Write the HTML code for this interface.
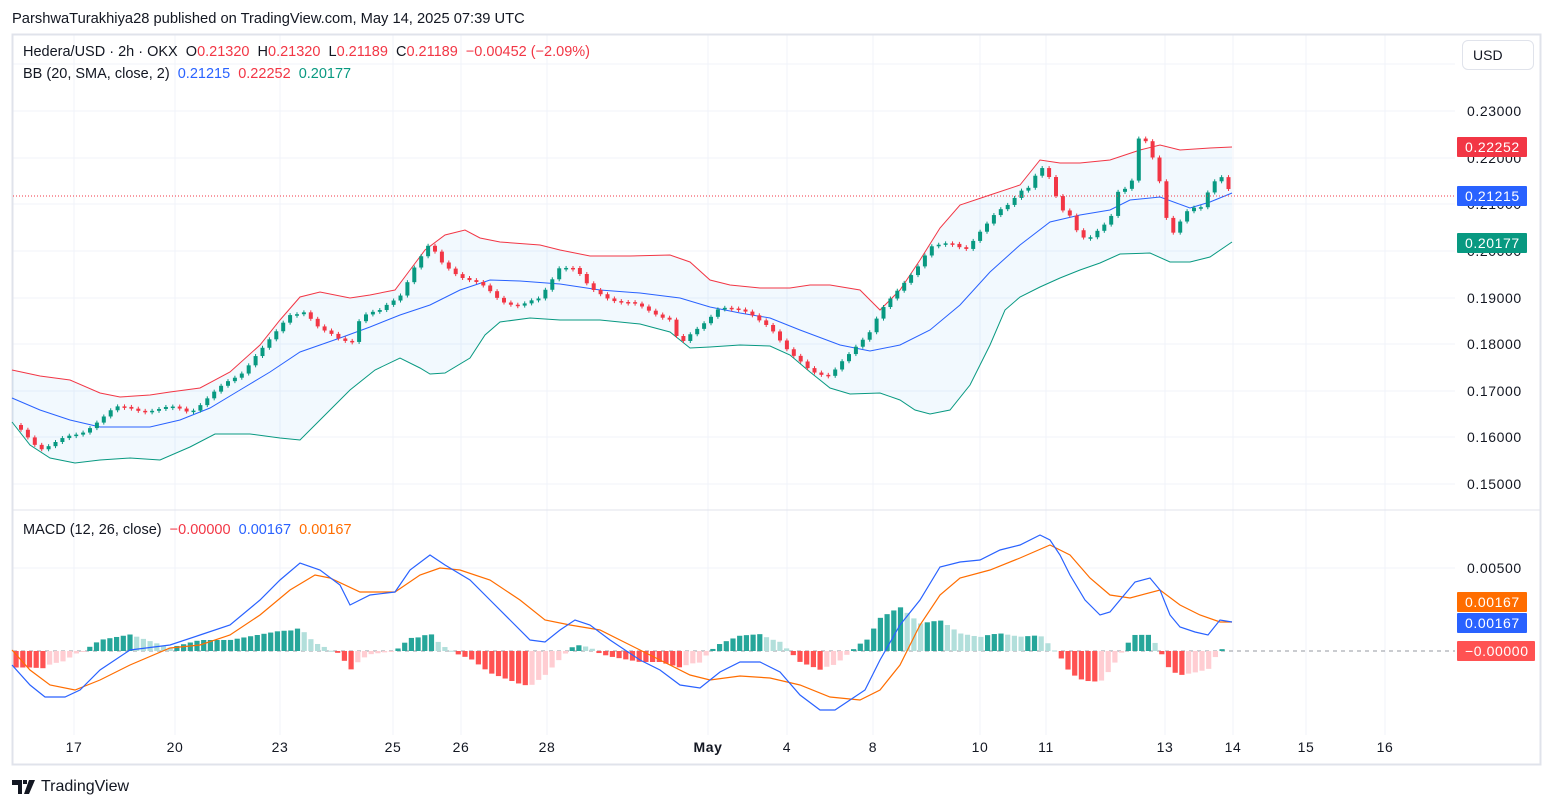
<!DOCTYPE html>
<html><head><meta charset="utf-8"><style>
body{margin:0;width:1554px;height:809px;background:#fff;font-family:"Liberation Sans",sans-serif;overflow:hidden;position:relative;color:#131722}
.t{position:absolute;white-space:nowrap}
</style></head><body>
<div class="t" style="left:12px;top:11px;font-size:14.7px;color:#131722">ParshwaTurakhiya28 published on TradingView.com, May 14, 2025 07:39 UTC</div>
<svg id="s" width="1554" height="809" style="position:absolute;left:0;top:0" xmlns="http://www.w3.org/2000/svg"></svg>
<div class="t" style="left:23px;top:44px;font-size:14.5px">Hedera/USD · 2h · OKX&nbsp; O<span style="color:#f23645">0.21320</span>&nbsp; H<span style="color:#f23645">0.21320</span>&nbsp; L<span style="color:#f23645">0.21189</span>&nbsp; C<span style="color:#f23645">0.21189</span>&nbsp; <span style="color:#f23645">−0.00452 (−2.09%)</span></div>
<div class="t" style="left:23px;top:66px;font-size:14.5px">BB (20, SMA, close, 2)&nbsp; <span style="color:#2962ff">0.21215</span>&nbsp; <span style="color:#f23645">0.22252</span>&nbsp; <span style="color:#089981">0.20177</span></div>
<div class="t" style="left:23px;top:522px;font-size:14.5px">MACD (12, 26, close)&nbsp; <span style="color:#f23645">−0.00000</span>&nbsp; <span style="color:#2962ff">0.00167</span>&nbsp; <span style="color:#ff6d00">0.00167</span></div>
<div class="t" style="left:1462px;top:40px;width:72px;height:30px;border:1px solid #e0e3eb;border-radius:6px;box-sizing:border-box;font-size:14px;line-height:28px;padding-left:10px">USD</div>
<div class="t" style="left:12px;top:778px;font-size:16px;display:flex;align-items:center"><svg width="26" height="14" viewBox="0 0 26 14"><path d="M0 0h10v14h-4v-9h-6z M11 0h4v4h-4z M17 0h6l-6 14h-5z" fill="#131722"/></svg><span style="margin-left:3px">TradingView</span></div>
<script>
const s=document.getElementById('s');let h='';
const L=(x1,y1,x2,y2,c,w,d)=>h+=`<line x1="${x1}" y1="${y1}" x2="${x2}" y2="${y2}" stroke="${c}" stroke-width="${w||1}" ${d?`stroke-dasharray="${d}"`:''}/>`;
const T=(x,y,t,c,a,fw)=>h+=`<text x="${x}" y="${y}" fill="${c||'#131722'}" font-size="14" letter-spacing="0.6" font-family="Liberation Sans" ${a?`text-anchor="${a}"`:''} ${fw?'font-weight="bold"':''}>${t}</text>`;
const days=[[74,'17'],[175,'20'],[280,'23'],[393,'25'],[461,'26'],[547,'28'],[708,'May'],[787,'4'],[873,'8'],[980,'10'],[1046,'11'],[1165,'13'],[1233,'14'],[1306,'15'],[1385,'16']];
days.forEach(d=>L(d[0],35,d[0],735,'#f0f3fa'));
[64,111,158,204,251,298,344,391,437,484].forEach(y=>L(13,y,1455,y,'#f0f3fa'));
L(13,568,1455,568,'#f0f3fa');
h+=`<rect x="12.5" y="34.5" width="1528" height="730" fill="none" stroke="#e0e3eb" stroke-width="2"/>`;
L(13,510,1540,510,'#e0e3eb',1);
function P(a){return a.map(p=>p.join(',')).join(' ')}
const up=[[12,370],[40,376],[70,380],[100,393],[120,397],[150,395],[170,392],[200,388],[230,372],[260,345],[280,320],[300,297],[320,292],[350,298],[370,295],[395,290],[410,270],[425,250],[445,235],[465,230],[480,238],[500,242],[540,245],[560,250],[590,256],[630,256],[670,255],[690,262],[710,280],[730,285],[760,288],[790,288],[810,285],[830,285],[860,290],[880,310],[900,290],[920,260],[940,228],[960,205],[990,195],[1020,185],[1040,160],[1060,163],[1080,163],[1110,160],[1140,150],[1160,145],[1180,150],[1210,148],[1232,147]];
const mid=[[12,398],[40,410],[70,420],[100,427],[150,427],[180,420],[210,408],[240,390],[270,372],[300,352],[340,338],[370,327],[400,315],[430,305],[460,290],[490,280],[520,281],[560,284],[600,290],[640,293],[680,298],[710,307],[740,313],[770,318],[800,330],[840,345],[870,351],[900,345],[930,330],[960,305],[990,272],[1020,245],[1050,222],[1080,215],[1110,210],[1130,200],[1160,197],[1190,208],[1210,202],[1232,193]];
const lo=[[12,422],[30,445],[50,458],[75,463],[100,460],[130,458],[160,460],[190,447],[215,434],[250,434],[280,438],[300,440],[320,420],[350,390],[375,370],[400,358],[420,368],[430,374],[445,373],[470,358],[485,335],[500,322],[530,318],[560,320],[600,320],[640,324],[670,332],[690,348],[710,347],[740,345],[770,346],[790,355],[810,372],[830,388],[850,394],[880,393],[900,400],[915,410],[930,414],[950,410],[970,385],[990,345],[1005,310],[1020,297],[1040,287],[1060,278],[1080,270],[1100,263],[1120,254],[1150,253],[1170,262],[1190,262],[1210,257],[1232,242]];
h+=`<polygon points="${P(up)} ${P(lo.slice().reverse())}" fill="#2196f3" fill-opacity="0.06"/>`;
h+=`<polyline points="${P(up)}" fill="none" stroke="#f23645" stroke-width="1"/>`;
h+=`<polyline points="${P(mid)}" fill="none" stroke="#2962ff" stroke-width="1"/>`;
h+=`<polyline points="${P(lo)}" fill="none" stroke="#089981" stroke-width="1"/>`;
function interp(a,x){for(let i=1;i<a.length;i++){if(x<=a[i][0]){const t=(x-a[i-1][0])/(a[i][0]-a[i-1][0]);return a[i-1][1]+t*(a[i][1]-a[i-1][1]);}}return a[a.length-1][1]}
const cl=[[14,425],[30,440],[40,448],[60,440],[80,435],[100,418],[115,408],[140,410],[170,408],[190,412],[210,395],[240,375],[255,355],[275,335],[290,315],[305,310],[320,330],[340,340],[355,340],[360,315],[380,312],[400,295],[415,265],[430,245],[440,262],[460,275],[480,285],[500,300],[520,305],[540,300],[560,265],[575,268],[590,290],[610,298],[630,303],[650,312],[670,318],[680,345],[700,328],[720,305],[750,315],[770,325],[790,355],[810,370],[830,375],[850,355],[870,330],[880,310],[900,290],[915,270],[930,245],[950,245],[965,250],[980,230],[995,215],[1010,205],[1020,190],[1030,185],[1040,165],[1050,180],[1060,210],[1070,215],[1080,235],[1090,237],[1100,230],[1110,222],[1120,185],[1130,190],[1140,130],[1150,150],[1160,185],[1170,238],[1180,220],[1190,205],[1200,210],[1210,190],[1220,175],[1232,193]];
let prev=interp(cl,14);
for(let x=21;x<=1233;x+=6.9){const c=interp(cl,x)+Math.sin(x*1.7)*2;const upc=c<prev;const col=upc?'#089981':'#f23645';const top=Math.min(c,prev),bh=Math.max(1.5,Math.abs(c-prev));L(x,top-2,x,top+bh+2,col,1);h+=`<rect x="${x-2}" y="${top}" width="4" height="${bh}" fill="${col}"/>`;prev=c;}
L(13,196,1455,196,'#f23645',1,'1 2');
const bl=[[12,665],[30,685],[45,697],[65,697],[80,690],[100,670],[130,650],[170,645],[200,635],[230,625],[260,600],[280,580],[300,563],[320,570],[340,585],[350,605],[370,595],[395,592],[410,570],[430,555],[445,565],[470,580],[490,600],[510,620],[530,640],[545,642],[560,630],[575,620],[590,625],[610,640],[640,660],[660,670],[680,685],[700,688],[720,672],[740,662],[760,662],[780,672],[800,695],[820,710],[835,710],[850,700],[865,690],[880,660],[900,625],[920,600],[940,567],[960,562],[980,560],[1000,550],[1020,545],[1040,535],[1050,540],[1060,555],[1070,575],[1085,600],[1100,615],[1110,612],[1120,600],[1135,582],[1150,578],[1160,590],[1170,615],[1180,627],[1195,632],[1208,635],[1220,620],[1232,622]];
const og=[[12,650],[30,670],[50,685],[75,690],[100,680],[130,665],[170,648],[200,645],[230,635],[260,615],[290,590],[315,575],[330,578],[360,592],[395,592],[420,575],[440,568],[460,570],[490,580],[520,600],[545,620],[570,625],[600,630],[630,645],[660,660],[690,675],[710,680],[740,676],[770,678],[800,685],[830,697],[860,700],[880,690],[900,665],[920,625],[940,595],[960,578],[990,570],[1020,558],[1050,545],[1070,555],[1090,578],[1110,595],[1130,598],[1160,590],[1180,605],[1200,615],[1220,622],[1232,622]];
L(13,651,1455,651,'#9598a1',1,'4 4');
let ph=0;
for(let x=16;x<=1226;x+=6.7){const v=(interp(og,x)-interp(bl,x))*1.1;let col;if(v>=0)col=v>=ph?'#26a69a':'#b2dfdb';else col=v<=ph?'#ff5252':'#ffcdd2';const y=v>=0?651-v:651;h+=`<rect x="${x-2.5}" y="${y}" width="5.2" height="${Math.max(1,Math.abs(v))}" fill="${col}"/>`;ph=v;}
h+=`<polyline points="${P(og)}" fill="none" stroke="#ff6d00" stroke-width="1.2"/>`;
h+=`<polyline points="${P(bl)}" fill="none" stroke="#2962ff" stroke-width="1.2"/>`;
[[116,'0.23000'],[163,'0.22000'],[209,'0.21000'],[256,'0.20000'],[303,'0.19000'],[349,'0.18000'],[396,'0.17000'],[442,'0.16000'],[489,'0.15000'],[573,'0.00500']].forEach(a=>T(1467,a[0],a[1]));
const tag=(y,c,t,w)=>{h+=`<rect x="1457" y="${y-10}" width="${w||70}" height="20" rx="1" fill="${c}"/>`;T(1465,y+5,t,'#fff',null,false);};
tag(147,'#f23645','0.22252');tag(196,'#2962ff','0.21215');tag(243,'#089981','0.20177');
tag(602,'#ff6d00','0.00167');tag(623,'#2962ff','0.00167');tag(651,'#ff5252','−0.00000',78);
days.forEach(d=>T(d[0],752,d[1],'#131722','middle',d[1]=='May'));
s.innerHTML=h;
</script>
</body></html>
